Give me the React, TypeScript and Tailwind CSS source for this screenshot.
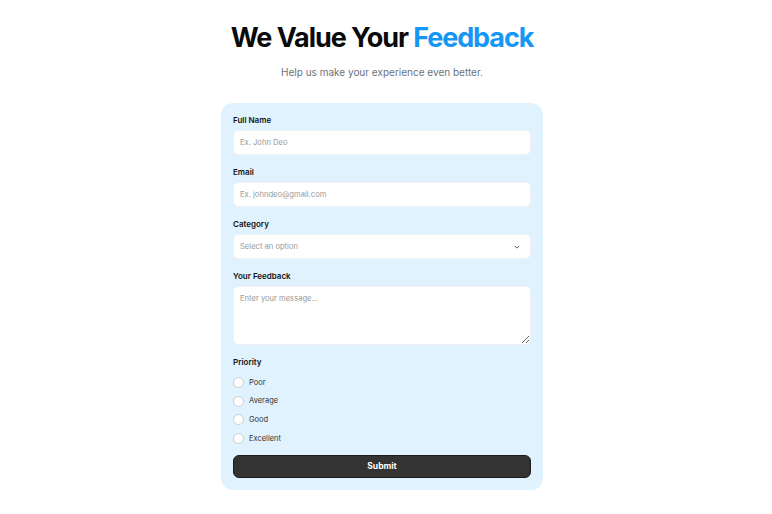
import { useState } from 'react';

const priorities = ['Poor', 'Average', 'Good', 'Excellent'];

export default function App() {
  const [priority, setPriority] = useState('');

  return (
    <div className="min-h-screen bg-white flex flex-col items-center pt-5 pr-2 font-['Inter',sans-serif] text-[#111]">
      <h1 className="text-[27px] leading-[36px] font-bold tracking-[-0.04em] text-[#0a0a0a]">
        We Value Your <span className="text-[#1697f6]">Feedback</span>
      </h1>
      <p className="mt-2 text-[10px] leading-4 text-[#6b7280]">Help us make your experience even better.</p>

      <form
        className="mt-[23px] w-[322px] bg-[#e0f2fe] rounded-xl px-3 pt-[10px] pb-3 flex flex-col"
        onSubmit={e => e.preventDefault()}
      >
        <label className="text-[8px] leading-[14px] font-semibold">Full Name</label>
        <input
          type="text"
          placeholder="Ex. John Deo"
          className="mt-[3px] h-[25px] bg-white rounded-[5px] border border-[#eef2f5] px-[6px] text-[7.6px] placeholder:text-[#999] focus:outline-none"
        />

        <label className="mt-[10px] text-[8px] leading-[14px] font-semibold">Email</label>
        <input
          type="email"
          placeholder="Ex. johndeo@gmail.com"
          className="mt-[3px] h-[25px] bg-white rounded-[5px] border border-[#eef2f5] px-[6px] text-[7.6px] placeholder:text-[#999] focus:outline-none"
        />

        <label className="mt-[10px] text-[8px] leading-[14px] font-semibold">Category</label>
        <div className="mt-[3px] h-[25px] bg-white rounded-[5px] border border-[#eef2f5] px-[6px] flex items-center justify-between">
          <span className="text-[7.6px] text-[#999]">Select an option</span>
          <svg className="w-[6px] h-[4px] mr-[4px]" viewBox="0 0 8 5" fill="none" stroke="#555" strokeWidth={1.3}>
            <path d="M1 1l3 3 3-3" />
          </svg>
        </div>

        <label className="mt-[10px] text-[8px] leading-[14px] font-semibold">Your Feedback</label>
        <textarea
          placeholder="Enter your message..."
          className="mt-[3px] h-[59px] bg-white rounded-[5px] border border-[#eef2f5] px-[6px] py-[6px] text-[7.6px] placeholder:text-[#999] focus:outline-none resize-y"
        />

        <label className="mt-[10px] text-[8px] leading-[14px] font-semibold">Priority</label>
        <div className="mt-[4px] flex flex-col">
          {priorities.map(p => (
            <label key={p} className="h-[18.7px] flex items-center gap-[5px] cursor-pointer" onClick={() => setPriority(p)}>
              <span className="w-[11px] h-[11px] rounded-full bg-white border border-[#c9cdd2] flex items-center justify-center">
                {priority === p && <span className="w-[5px] h-[5px] rounded-full bg-[#1697f6]" />}
              </span>
              <span className="text-[7.5px] text-[#333]">{p}</span>
            </label>
          ))}
        </div>

        <button
          type="submit"
          className="mt-[7px] h-[23px] rounded-[6px] bg-[#333333] border border-[#1c1c1c] text-white text-[8.5px] font-bold"
        >
          Submit
        </button>
      </form>
    </div>
  );
}
